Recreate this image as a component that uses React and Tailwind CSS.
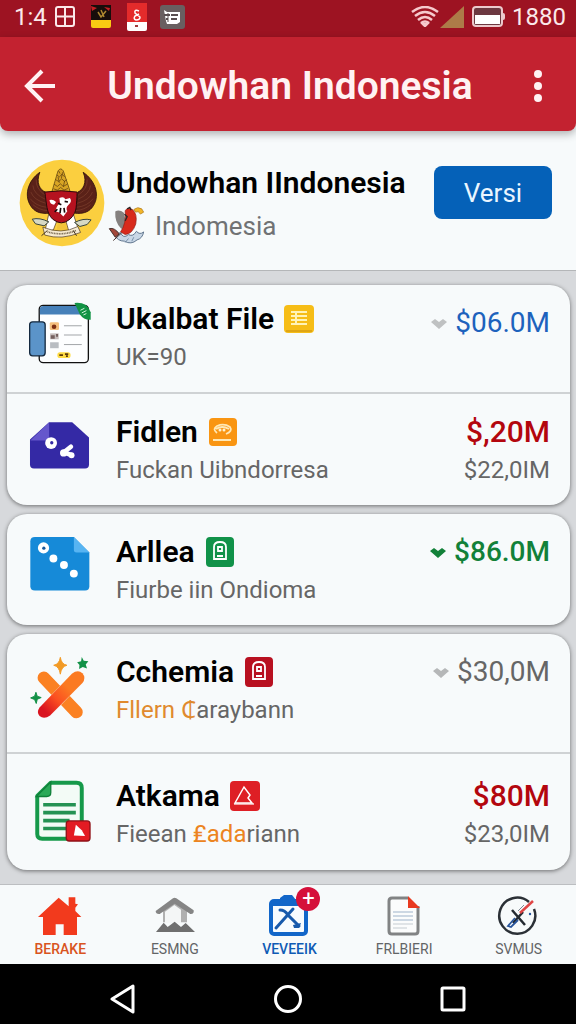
import React, { useState } from 'react';

function Emblem() {
  return (
    <svg viewBox="58 56 260 266" className="w-[86px] h-[88px] shrink-0" aria-hidden="true">
      <ellipse cx="188" cy="189" rx="128" ry="131" fill="#fbcf3f" />
      <g fill="#5a2118" stroke="#2c0f0b" strokeWidth="2.5">
        <path d="M121 96C84 122 70 170 98 204C110 218 128 222 148 220L138 156C122 150 108 128 121 96Z" />
        <path d="M252 96C290 122 306 170 278 204C266 218 248 222 228 220L236 156C250 150 266 128 252 96Z" />
      </g>
      <g fill="none" stroke="#8a4a34" strokeWidth="1.5">
        <path d="M110 118Q108 146 138 166M100 136Q102 162 138 178M94 156Q102 180 140 190M92 176Q108 198 142 202M100 194Q118 210 144 212" />
        <path d="M264 118Q266 146 236 166M274 136Q272 162 236 178M280 156Q272 180 234 190M282 176Q266 198 232 202M274 194Q256 210 230 212" />
      </g>
      <path d="M176 92Q184 80 192 92L210 146Q216 154 206 156H164Q154 154 160 146Z" fill="#d8a524" stroke="#4a300c" strokeWidth="2" />
      <path d="M172 104l8 6 8-8 8 8M168 118l10 6 9-8 9 8 6-6M164 132l10 7 9-8 9 8 12-7M162 146l12 4 10-8 10 8 12-5M178 92l4 8M190 96l-4 18M176 110l4 18M196 122l-4 18" fill="none" stroke="#54370d" strokeWidth="2" />
      <path d="M148 222L136 276L162 270L172 244ZM222 222L240 276L208 272L200 244Z" fill="#fff" stroke="#3c2a1c" strokeWidth="2" />
      <path d="M176 244L172 270H204L198 244Z" fill="#f3c43a" />
      <path d="M136 156Q186 148 234 156C230 196 236 216 212 238Q186 260 160 238C140 220 142 190 136 156Z" fill="#b5121f" stroke="#2a0a0a" strokeWidth="3" />
      <path d="M150 180Q160 176 170 186L164 194Q152 194 150 180ZM180 174Q194 168 198 178L212 174Q220 184 208 194Q198 202 204 214L192 230L180 218L168 214Q172 196 182 190Z" fill="#fff" />
      <path d="M176 190l10 4M196 184l10 2M184 204l-2 16M194 204l2 14M174 208l-8 8" stroke="#170709" strokeWidth="5" />
      <path d="M98 238Q120 232 148 246L134 258L108 252ZM276 240Q252 234 226 248L242 260L264 254Z" fill="#d7d9c4" stroke="#37453c" strokeWidth="3" />
      <path d="M130 262Q186 286 236 260L244 278Q186 302 136 286Z" fill="#f6ead0" stroke="#43301f" strokeWidth="2" />
      <path d="M144 276Q188 290 230 272" stroke="#766751" strokeWidth="5" strokeDasharray="3 2" fill="none" />
      <path d="M126 288L144 272M232 288L222 272" stroke="#43301f" strokeWidth="3" />
    </svg>
  );
}

function BirdIcon() {
  return (
    <svg viewBox="324 198 112 120" className="w-[37px] h-[40px] shrink-0" aria-hidden="true">
      <path d="M346 214Q358 206 372 218L382 262L364 266Q344 248 346 214Z" fill="#85817f" />
      <path d="M376 212Q382 200 398 208Q414 222 408 252Q398 282 376 284L362 276Q380 250 376 212Z" fill="#d82a1c" stroke="#8d1a13" strokeWidth="2" />
      <path d="M382 206l8-4 4 8M374 222l8 8-6 12" stroke="#292524" strokeWidth="4" fill="none" />
      <path d="M402 208Q414 198 426 206L432 216L422 222Q416 210 408 216Z" fill="#f1b529" stroke="#a87112" strokeWidth="2" />
      <path d="M344 284Q352 304 374 304Q394 316 412 300Q428 296 432 276Q420 286 410 274Q400 292 386 284Q370 298 362 278Z" fill="#c9d7e6" stroke="#60758e" strokeWidth="3" />
      <path d="M328 266Q344 262 358 282L346 292ZM340 302L364 280" fill="#a3483a" stroke="#45302c" strokeWidth="3" />
      <path d="M376 308l10-12M396 304l6-12" stroke="#7790a9" strokeWidth="3" />
    </svg>
  );
}

function NotebookIcon() {
  return (
    <svg viewBox="86 76 188 188" className="w-[62px] h-[62px] overflow-visible" aria-hidden="true">
      <rect x="117" y="77" width="149" height="174" rx="12" fill="#fdfeff" stroke="#111" strokeWidth="4" />
      <path d="M119 105V88Q119 79 130 79H250Q264 79 264 92V105Z" fill="#4680b9" />
      <rect x="88" y="127" width="47" height="103" rx="9" fill="#5b94c9" stroke="#14293f" strokeWidth="4" />
      <path d="M224 70Q262 66 273 98V121Q252 122 240 104Z" fill="#119344" />
      <path d="M242 92l12-6M246 100l14-7M251 106l9-4" stroke="#d8f5df" strokeWidth="3" />
      <rect x="149" y="128" width="28" height="24" rx="4" fill="#f5bf7e" />
      <circle cx="162" cy="142" r="7" fill="#7c2d12" />
      <rect x="150" y="162" width="26" height="18" fill="#c5bcbb" />
      <path d="M152 168h12v10h-12zM168 164h6v8h-6z" fill="#75605f" />
      <rect x="150" y="189" width="26" height="18" fill="#b9bdc2" />
      <path d="M192 139h54M192 167h54M192 196h54" stroke="#a1a5a8" strokeWidth="3" />
      <rect x="172" y="219" width="40" height="18" rx="8" fill="#ffdc45" />
      <path d="M178 228h11M195 225h10M198 231h6" stroke="#5b390b" strokeWidth="5" />
    </svg>
  );
}

function FolderIcon() {
  return (
    <svg viewBox="86 68 188 188" className="w-[62px] h-[62px] overflow-visible" aria-hidden="true">
      <path d="M147 81H217L268 127V209Q268 221 256 221H101Q89 221 89 209V133Z" fill="#3429a5" />
      <path d="M147 81V126Q147 136 136 136H90Z" fill="#6557cc" />
      <circle cx="153" cy="144" r="18" fill="#fff" />
      <circle cx="155" cy="143" r="5" fill="#3429a5" />
      <path d="M192 172L213 155M192 172L216 181" stroke="#fff" strokeWidth="14" strokeLinecap="round" />
      <circle cx="191" cy="174" r="11" fill="#fff" />
      <circle cx="215" cy="181" r="9" fill="#fff" />
    </svg>
  );
}

function DotsFileIcon() {
  return (
    <svg viewBox="86 82 188 188" className="w-[62px] h-[62px] overflow-visible" aria-hidden="true">
      <path d="M104 79H222L269 126V228Q269 241 256 241H104Q90 241 90 228V92Q90 79 104 79Z" fill="#168ad8" />
      <path d="M222 79L269 126H230Q222 126 222 118Z" fill="#57b4f2" />
      <circle cx="130" cy="112" r="17" fill="#fff" />
      <circle cx="131" cy="113" r="5" fill="#14579a" />
      <circle cx="160" cy="144" r="12" fill="#fff" />
      <circle cx="192" cy="164" r="12" fill="#fff" />
      <circle cx="222" cy="190" r="12" fill="#fff" />
    </svg>
  );
}

function SparkCrossIcon() {
  return (
    <svg viewBox="86 82 188 188" className="w-[62px] h-[62px] overflow-visible" aria-hidden="true">
      <defs>
        <linearGradient id="stick" x1="0" y1="1" x2="1" y2="0">
          <stop offset="0.15" stopColor="#d91420" />
          <stop offset="0.4" stopColor="#fb4f20" />
          <stop offset="0.65" stopColor="#fb7a22" />
        </linearGradient>
      </defs>
      <path d="M131 142L230 246" stroke="#fb8122" strokeWidth="38" strokeLinecap="round" />
      <path d="M148 230L218 158" stroke="#f7fafa" strokeWidth="42" />
      <path d="M118 232L216 130Q234 116 248 128Q260 142 248 158L150 256Q132 270 118 258Q108 246 118 232Z" fill="url(#stick)" />
      <path d="M181 80Q184 101 201 104Q184 108 181 131Q178 108 161 104Q178 101 181 80Z" fill="#f29a25" stroke="#f29a25" strokeWidth="3" strokeLinejoin="round" />
      <path d="M246 79l6 11 14 2-8 10 4 12-13-5-11 6 1-12-7-8 12-3Z" fill="#129147" />
      <path d="M107 186l4 12 12 4-12 5-3 13-5-12-12-5 12-5Z" fill="#129147" stroke="#129147" strokeWidth="3" />
    </svg>
  );
}

function ReportIcon() {
  return (
    <svg viewBox="86 90 188 188" className="w-[62px] h-[62px] overflow-visible" aria-hidden="true">
      <path d="M152 92H230Q246 92 246 108V248Q246 262 232 262H126Q111 262 111 248V132Z" fill="#f3fbf6" stroke="#16994a" strokeWidth="12" strokeLinejoin="round" />
      <path d="M152 90V122Q152 134 140 134H108Z" fill="#2aa957" stroke="#0f8039" strokeWidth="4" />
      <path d="M129 159h99M129 183h99M129 207h80M129 231h70" stroke="#259253" strokeWidth="11" />
      <rect x="199" y="208" width="72" height="61" rx="9" fill="#e31b23" stroke="#8f1117" strokeWidth="4" />
      <path d="M222 252L228 220L246 236L256 254Z" fill="#fff" />
    </svg>
  );
}

function Badge({ kind }) {
  if (kind === 'list') {
    return (
      <svg viewBox="0 0 30 28" className="w-[30px] h-[28px] shrink-0" aria-hidden="true">
        <rect width="30" height="28" rx="4" fill="#f6bd17" />
        <path d="M2 26H28" stroke="#dfa514" strokeWidth="2" fill="none" />
        <path d="M7 7h4M7 11h4M7 15h4M7 19h4M13 7h10M13 11h10M13 15h10M13 19h10M12 6v14" stroke="#fff3b8" strokeWidth="2" />
      </svg>
    );
  }
  if (kind === 'face') {
    return (
      <svg viewBox="0 0 30 30" className="w-[30px] h-[30px] shrink-0" aria-hidden="true">
        <rect x="1" y="1" width="28" height="28" rx="4" fill="#f99512" />
        <path d="M9 16Q4 12 9 9Q16 6 22 10Q25 14 18 17M8 12Q14 8 21 12" fill="none" stroke="#ffe8b5" strokeWidth="1.8" />
        <circle cx="12" cy="13" r="1.5" fill="#fff1cf" />
        <circle cx="16" cy="13" r="1.5" fill="#fff1cf" />
        <path d="M5 23h18" stroke="#ffe8b5" strokeWidth="2" />
      </svg>
    );
  }
  if (kind === 'triangle') {
    return (
      <svg viewBox="0 0 30 30" className="w-[30px] h-[30px] shrink-0" aria-hidden="true">
        <rect width="30" height="30" rx="4" fill="#de1f25" />
        <path d="M5 22L14 6L20 14L18 17L22 22Z" fill="none" stroke="#fff" strokeWidth="1.5" />
        <path d="M4 23h20" stroke="#fff" strokeWidth="1.2" />
      </svg>
    );
  }
  return (
    <svg viewBox="0 0 30 32" className="w-[30px] h-[32px] shrink-0" aria-hidden="true">
      <rect x="1" y="1" width="28" height="30" rx="4" fill={kind === 'lock' ? '#119249' : '#b81020'} />
      <path d="M9 23V11Q9 6 15 6Q21 6 21 11V23Z" fill="none" stroke="#fff" strokeWidth="1.8" />
      <path d="M12 20h6M13 11h4v4h-4Z" fill="none" stroke="#fff" strokeWidth="1.8" />
    </svg>
  );
}

function Trend({ className }) {
  return (
    <svg viewBox="0 0 16 11" className={className} aria-hidden="true">
      <path d="M0 4L4 1L8 4L12 1L16 4L8 11Z" fill="currentColor" />
    </svg>
  );
}

const groups = [
  [
    {
      name: 'Ukalbat File',
      badge: 'list',
      Icon: NotebookIcon,
      detail: 'UK=90',
      pad: 'pt-4 pb-[15px]',
      price: '$06.0M',
      priceClass: 'pt-1 text-[28px] text-[#1d62bd]',
      trend: 'text-[#bfc1c2]'
    },
    {
      name: 'Fidlen',
      badge: 'face',
      Icon: FolderIcon,
      detail: 'Fuckan Uibndorresa',
      pad: 'pt-5 pb-[15px]',
      price: '$,20M',
      priceClass: 'text-[30px] font-medium text-[#b3060e]',
      subPrice: '$22,0IM'
    }
  ],
  [
    {
      name: 'Arllea',
      badge: 'lock',
      Icon: DotsFileIcon,
      detail: 'Fiurbe iin Ondioma',
      pad: 'pt-5 pb-[15px]',
      price: '$86.0M',
      priceClass: 'text-[28px] font-medium text-[#128139]',
      trend: 'text-[#128139]'
    }
  ],
  [
    {
      name: 'Cchemia',
      badge: 'lockRed',
      Icon: SparkCrossIcon,
      detail: <><span className="text-[#e08a2e]">Fllern ₵</span>araybann</>,
      pad: 'pt-5 pb-[22px]',
      price: '$30,0M',
      priceClass: 'text-[28px] text-[#666]',
      trend: 'text-[#b5b7b8]'
    },
    {
      name: 'Atkama',
      badge: 'triangle',
      Icon: ReportIcon,
      detail: <>Fieean <span className="text-[#ec8420]">₤ada</span>riann</>,
      pad: 'pt-6 pb-4',
      price: '$80M',
      priceClass: 'text-[30px] font-medium text-[#b3060e]',
      subPrice: '$23,0IM'
    }
  ]
];

function Row({ item }) {
  const { Icon } = item;
  return (
    <li className={`flex items-start pl-[22px] pr-5 border-t-2 border-[#cfd2d4] first:border-t-0 ${item.pad}`}>
      <div className="pt-1">
        <Icon />
      </div>
      <div className="ml-[25px] flex-1 min-w-0">
        <h3 className="flex items-center gap-[10px] text-[30px] leading-9 font-semibold text-black whitespace-nowrap">
          {item.name}
          <Badge kind={item.badge} />
        </h3>
        <p className="text-[24px] leading-10 text-[#666] whitespace-nowrap">{item.detail}</p>
      </div>
      <div className="text-right whitespace-nowrap">
        <p className={`flex items-center justify-end gap-2 leading-9 ${item.priceClass}`}>
          {item.trend && <Trend className={`w-4 h-[11px] ${item.trend}`} />}
          {item.price}
        </p>
        {item.subPrice && <p className="text-[24px] leading-10 text-[#666]">{item.subPrice}</p>}
      </div>
    </li>
  );
}

const tabs = [
  {
    label: 'BERAKE',
    color: 'text-[#d9541e] font-medium',
    icon: (
      <svg viewBox="105 60 138 126" className="w-[46px] h-[42px]" aria-hidden="true">
        <path d="M108 126L170 68L200 94V67H220V86L228 88L220 98V108L238 126H225V180H185V148H161V180H123V126Z" fill="#f23a1d" />
      </svg>
    )
  },
  {
    label: 'ESMNG',
    color: 'text-[#626466]',
    icon: (
      <svg viewBox="457 60 138 126" className="w-[46px] h-[42px]" aria-hidden="true">
        <path d="M490 108L525 84L562 108V142H490Z" fill="#b0b0b0" />
        <path d="M496 110L524 90L544 104V144H496Z" fill="#f4f6f6" />
        <path d="M468 108L520 70Q525 67 530 70L582 106Q584 118 572 117L525 86L480 117Q468 118 468 108Z" fill="#858585" />
        <path d="M469 171L492 143L504 156L525 140L544 156L558 144L586 171Z" fill="#6f6f6f" />
      </svg>
    )
  },
  {
    label: 'VEVEEIK',
    color: 'text-[#0f5bb5] font-medium',
    icon: (
      <svg viewBox="0 0 46 42" className="w-[46px] h-[42px]" aria-hidden="true">
        <path d="M14 3L18 0H26L30 5H14Z" fill="#1266c9" />
        <rect x="5" y="6" width="35" height="33" rx="3" fill="#f7fbff" stroke="#1266c9" strokeWidth="4" />
        <path d="M5 8h34" stroke="#1266c9" strokeWidth="6" />
        <path d="M10 33L27 14M14 15Q19 15 22 20L33 31" stroke="#1759ac" strokeWidth="3" fill="none" strokeLinecap="round" />
        <path d="M27 30L35 28L33 33L28 33Z" fill="#1759ac" />
      </svg>
    ),
    badge: '+'
  },
  {
    label: 'FRLBIERI',
    color: 'text-[#626466]',
    icon: (
      <svg viewBox="0 0 46 42" className="w-[46px] h-[42px]" aria-hidden="true">
        <path d="M27 3H11Q8 3 8 6V36Q8 39 11 39H34Q37 39 37 36V11" fill="#fbfcfc" stroke="#818384" strokeWidth="3" />
        <path d="M27 1L39 13H27Z" fill="#e93a20" />
        <path d="M12 17h20M12 21h20M12 25h20" stroke="#9eb3ca" strokeWidth="1" />
        <path d="M12 29h20M12 33h14" stroke="#c5ccd1" strokeWidth="1" />
      </svg>
    )
  },
  {
    label: 'SVMUS',
    color: 'text-[#626466]',
    icon: (
      <svg viewBox="0 0 46 42" className="w-[46px] h-[42px]" aria-hidden="true">
        <path d="M33 7A18 18 0 1 0 38 14" fill="none" stroke="#2b3036" strokeWidth="2.5" />
        <path d="M16 15L29 30M27 17L17 28" stroke="#242a31" strokeWidth="2.5" />
        <path d="M24 18L37 6" stroke="#e04646" strokeWidth="2.5" />
        <path d="M22 25L15 32L12 31L19 23" stroke="#28549b" strokeWidth="1.8" fill="none" />
        <circle cx="34" cy="19" r="1.2" fill="#28549b" />
        <path d="M22 16l6-6" stroke="#7e8793" strokeWidth="1" />
      </svg>
    )
  }
];

function StatusBar() {
  return (
    <div className="flex items-center justify-between h-[37px] pl-[14px] pr-[10px] pb-1 bg-[#9d1322] text-[24px] leading-8 text-[#fbe9ea]">
      <div className="flex items-center">
        <span>1:4</span>
        <svg viewBox="0 0 20 21" className="ml-2 w-5 h-[21px]" fill="none" stroke="#fbe9ea" strokeWidth="2" aria-hidden="true">
          <rect x="1" y="1" width="18" height="19" rx="2" />
          <path d="M10 1v19M1 10.5h18" />
        </svg>
        <svg viewBox="0 0 22 24" className="ml-[15px] w-[22px] h-6" aria-hidden="true">
          <rect x="1" width="20" height="17" fill="#170d0b" />
          <path d="M1 1l6 2-5 3M14 2l5 4 1-3" fill="#c41e23" />
          <path d="M8 7l3 5 5-6M11 5l3 7" stroke="#ad8730" strokeWidth="1.5" fill="none" />
          <path d="M1 15H21V21Q21 23 19 23H3Q1 23 1 21Z" fill="#f9cb13" />
        </svg>
        <svg viewBox="0 0 20 28" className="ml-[15px] w-5 h-7" aria-hidden="true">
          <path d="M0 0H20V21H0Z" fill="#e42b2b" />
          <path d="M12 8Q7 6 8 10L13 14Q13 17 9 17Q6 16 8 13L12 11" stroke="#fff" strokeWidth="1.5" fill="none" />
          <path d="M0 19H20V26Q20 28 18 28H2Q0 28 0 26Z" fill="#fff" />
          <path d="M8 23h3" stroke="#a13b3b" strokeWidth="2" />
        </svg>
        <svg viewBox="0 0 25 24" className="ml-[13px] w-[25px] h-6" aria-hidden="true">
          <rect width="25" height="24" rx="3" fill="#695f60" />
          <path d="M4 5L7 7H20V17L17 19H7L6 16" fill="#fff" />
          <path d="M4 10h6M11 10h7M11 14h6M6 14h2" stroke="#5a4f51" strokeWidth="2" />
          <path d="M8 8v9" stroke="#5a4f51" strokeWidth="1" />
        </svg>
      </div>
      <div className="flex items-center">
        <svg viewBox="0 0 28 21" className="w-7 h-[21px]" fill="none" stroke="#f6c9cd" strokeWidth="2.5" aria-hidden="true">
          <path d="M1 6Q14 -4 27 6M4 10Q14 2 24 10M7 14Q14 8 21 14M10 17Q14 14 18 17" />
          <path d="M12 18L14 20L16 18Z" fill="#f6c9cd" />
        </svg>
        <svg viewBox="0 0 24 22" className="ml-[1px] w-6 h-[22px]" aria-hidden="true">
          <path d="M0 22L24 0V22Z" fill="#ad7b48" />
        </svg>
        <svg viewBox="0 0 33 21" className="ml-2 w-[33px] h-[21px]" aria-hidden="true">
          <rect x="1" y="1" width="29" height="19" rx="3" fill="#6c3840" stroke="#ecc9cc" strokeWidth="2" />
          <path d="M30 7H31Q33 7 33 9V12Q33 14 31 14H30Z" fill="#ecc9cc" />
          <rect x="3" y="9" width="25" height="9" fill="#fff" />
        </svg>
        <span className="ml-[7px]">1880</span>
      </div>
    </div>
  );
}

export default function App() {
  const [active, setActive] = useState('VEVEEIK');

  return (
    <div className="flex flex-col min-h-screen bg-[#d7d9dc] font-['Roboto','Noto_Sans',sans-serif]">
      <StatusBar />

      <div className="bg-[#f7fafb] border-b border-[#b4b6b8]">
        <header className="flex items-center h-[94px] pt-1 px-6 rounded-b-lg bg-[#c32230] shadow-[0_3px_8px_rgba(0,0,0,0.3)]">
          <button type="button" aria-label="Back" className="w-8">
            <svg viewBox="0 0 32 34" className="w-8 h-[34px]" fill="none" stroke="#fff2f3" strokeWidth="4" aria-hidden="true">
              <path d="M18 2L3 17L18 32M3 17H31" />
            </svg>
          </button>
          <h1 className="flex-1 text-center text-[39px] leading-[48px] font-semibold text-[#fff2f3] whitespace-nowrap">
            Undowhan Indonesia
          </h1>
          <button type="button" aria-label="More options" className="w-7">
            <svg viewBox="0 0 28 34" className="w-7 h-[34px]" fill="#fff2f3" aria-hidden="true">
              <circle cx="14" cy="5" r="4" />
              <circle cx="14" cy="17" r="4" />
              <circle cx="14" cy="29" r="4" />
            </svg>
          </button>
        </header>

        <section className="flex items-start px-[19px] pt-7 pb-[23px]">
          <Emblem />
          <div className="ml-[11px] pt-1 flex-1 min-w-0">
            <h2 className="text-[30px] leading-10 font-semibold text-black whitespace-nowrap">Undowhan IIndonesia</h2>
            <div className="flex items-center gap-[10px] mt-[3px] -ml-2">
              <BirdIcon />
              <span className="text-[26px] leading-10 text-[#707274]">Indomesia</span>
            </div>
          </div>
          <button
            type="button"
            className="mt-[7px] mr-[5px] w-[118px] h-[53px] shrink-0 rounded-lg bg-[#0561b8] hover:bg-[#04539e] text-[26px] leading-8 text-[#eaf6ff]"
          >
            Versi
          </button>
        </section>
      </div>

      <main className="flex-1 flex flex-col gap-[9px] pl-[7px] pr-[6px] py-[14px]">
        {groups.map((rows, i) => (
          <ul key={i} className="rounded-[20px] bg-[#f7fafb] shadow-[0_1px_4px_rgba(0,0,0,0.5)]">
            {rows.map((item) => (
              <Row key={item.name} item={item} />
            ))}
          </ul>
        ))}
      </main>

      <nav className="grid grid-cols-5 h-[80px] pl-[3px] pt-[10px] border-t border-[#bcbec1] bg-[#f7fafb]">
        {tabs.map((tab) => (
          <a
            key={tab.label}
            href={`#${tab.label.toLowerCase()}`}
            aria-current={active === tab.label ? 'page' : undefined}
            onClick={() => setActive(tab.label)}
            className={`flex flex-col items-center ${tab.color}`}
          >
            <span className="relative">
              {tab.icon}
              {tab.badge && (
                <span className="absolute -top-2 -right-2 flex items-center justify-center w-6 h-6 rounded-full bg-[#d5103a] text-[22px] leading-6 font-normal text-white">
                  {tab.badge}
                </span>
              )}
            </span>
            <span className="text-[14px] leading-6">{tab.label}</span>
          </a>
        ))}
      </nav>

      <div className="grid grid-cols-3 items-center justify-items-center h-[61px] px-[41px] pt-2 bg-black">
        <button type="button" aria-label="Navigate back">
          <svg viewBox="0 0 28 30" className="w-7 h-[30px]" fill="none" stroke="#fff" strokeWidth="3" strokeLinejoin="round" aria-hidden="true">
            <path d="M3 15L24 2V28Z" />
          </svg>
        </button>
        <button type="button" aria-label="Home">
          <svg viewBox="0 0 30 30" className="w-[30px] h-[30px]" fill="none" stroke="#fff" strokeWidth="3" aria-hidden="true">
            <circle cx="15" cy="15" r="12.5" />
          </svg>
        </button>
        <button type="button" aria-label="Recent apps">
          <svg viewBox="0 0 28 28" className="w-7 h-7" fill="none" stroke="#fff" strokeWidth="3" aria-hidden="true">
            <rect x="3" y="3" width="22" height="22" rx="1" />
          </svg>
        </button>
      </div>
    </div>
  );
}
